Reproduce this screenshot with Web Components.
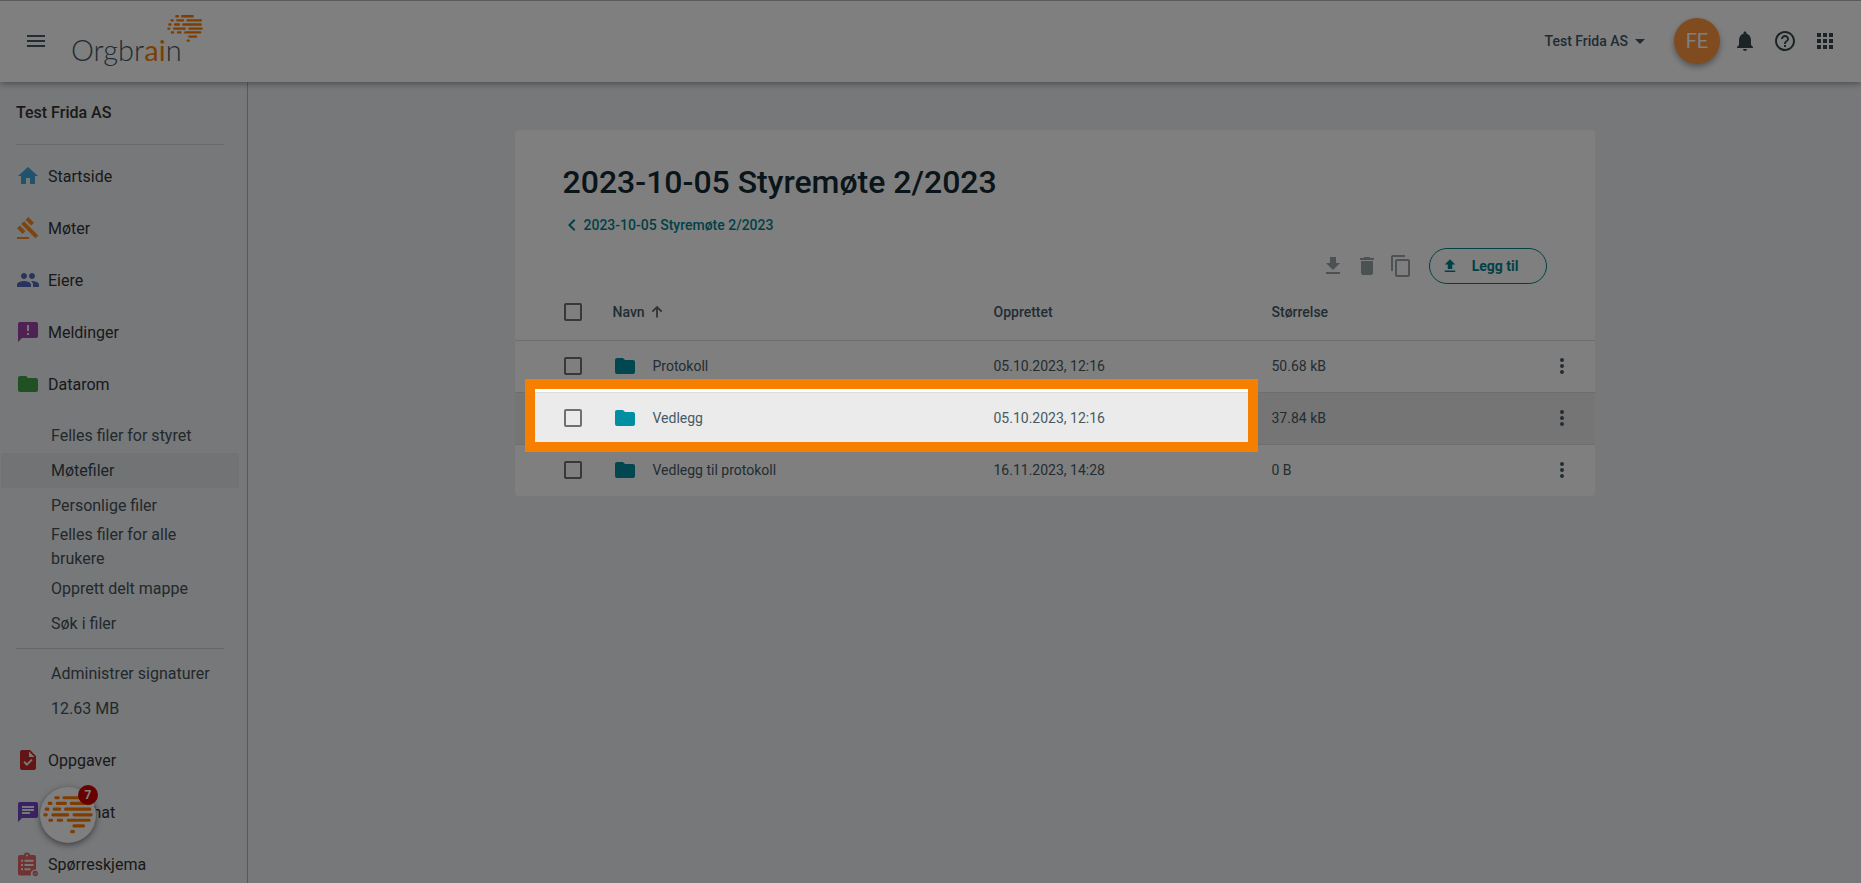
<!DOCTYPE html>
<html lang="no">
<head>
<meta charset="utf-8">
<meta name="viewport" content="width=device-width, initial-scale=1">
<title>Orgbrain – Møtefiler</title>
<style>
  html, body { height: 100%; margin: 0; }
  body { font-family: Roboto, "Liberation Sans", sans-serif; font-size: 16px; color: #37474f; overflow: hidden; }
</style>
</head>
<body>
<ob-app></ob-app>

<script>
const ICONS = {
  menu: '<path d="M3 18h18v-2H3v2zm0-5h18v-2H3v2zm0-7v2h18V6H3z"/>',
  home: '<path d="M10 20v-6h4v6h5v-8h3L12 3 2 12h3v8z"/>',
  gavel: '<path d="M1 21h12v2H1zM5.245 8.07l2.83-2.827 14.14 14.142-2.828 2.828zM12.317 1l5.657 5.656-2.83 2.83-5.654-5.66zM3.825 9.485l5.657 5.657-2.828 2.828-5.657-5.657z"/>',
  people: '<path d="M16 11c1.66 0 2.99-1.34 2.99-3S17.66 5 16 5s-3 1.34-3 3 1.34 3 3 3zm-8 0c1.66 0 2.99-1.34 2.99-3S9.66 5 8 5 5 6.34 5 8s1.34 3 3 3zm0 2c-2.33 0-7 1.17-7 3.5V19h14v-2.5c0-2.33-4.67-3.5-7-3.5zm8 0c-.29 0-.62.02-.97.05 1.16.84 1.97 1.97 1.97 3.45V19h6v-2.5c0-2.33-4.67-3.5-7-3.5z"/>',
  feedback: '<path d="M20 2H4c-1.1 0-1.99.9-1.99 2L2 22l4-4h14c1.1 0 2-.9 2-2V4c0-1.1-.9-2-2-2zm-7 9h-2V5h2v6zm0 4h-2v-2h2v2z"/>',
  folder: '<path d="M10 4H4c-1.1 0-1.99.9-1.99 2L2 18c0 1.1.9 2 2 2h16c1.1 0 2-.9 2-2V8c0-1.1-.9-2-2-2h-8l-2-2z"/>',
  task: '<path d="M14 2H6c-1.1 0-1.99.9-1.99 2L4 20c0 1.1.89 2 1.99 2H18c1.1 0 2-.9 2-2V8l-6-6zm-3.06 16L7.4 14.46l1.41-1.41 2.12 2.12 4.24-4.24 1.41 1.41L10.94 18zM13 9V3.5L18.5 9H13z"/>',
  chat: '<path d="M20 2H4c-1.1 0-1.99.9-1.99 2L2 22l4-4h14c1.1 0 2-.9 2-2V4c0-1.1-.9-2-2-2zM6 9h12v2H6V9zm8 5H6v-2h8v2zm4-6H6V6h12v2z"/>',
  survey: '<path fill-rule="evenodd" d="M4 3h3.8a3.3 3.3 0 0 1 6.4 0H18a2 2 0 0 1 2 2v12.6a4.4 4.4 0 0 0-5 5.900H4a2 2 0 0 1-2-2V5a2 2 0 0 1 2-2zm7-.6a1 1 0 1 0 0 2 1 1 0 0 0 0-2zM5 7.800v2h2v-2zm3.500 0v2H17.500v-2zM5 12v2h2v-2zm3.500 0v2H17.500v-2zM5 16.300v2h2v-2zm3.500 0v2H14.500v-2z"/><circle cx="19.300" cy="21.500" r="2.700"/><path d="M18 21.600l1 1 1.700-2" fill="none" stroke="#eef0f4" stroke-width=".8"/>',
  bell: '<path d="M12 22c1.1 0 2-.9 2-2h-4c0 1.1.89 2 2 2zm6-6v-5c0-3.070-1.640-5.640-4.500-6.320V4c0-.83-.67-1.500-1.500-1.500s-1.500.67-1.500 1.500v.68C7.630 5.360 6 7.920 6 11v5l-2 2v1h16v-1l-2-2z"/>',
  help: '<path d="M11 18h2v-2h-2v2zm1-16C6.480 2 2 6.480 2 12s4.480 10 10 10 10-4.480 10-10S17.520 2 12 2zm0 18c-4.410 0-8-3.590-8-8s3.590-8 8-8 8 3.590 8 8-3.590 8-8 8zm0-14c-2.210 0-4 1.790-4 4h2c0-1.100.9-2 2-2s2 .9 2 2c0 2-3 1.750-3 5h2c0-2.250 3-2.500 3-5 0-2.210-1.790-4-4-4z"/>',
  apps: '<path d="M4 8h4V4H4v4zm6 12h4v-4h-4v4zm-6 0h4v-4H4v4zm0-6h4v-4H4v4zm6 0h4v-4h-4v4zm6-10v4h4V4h-4zm-6 4h4V4h-4v4zm6 6h4v-4h-4v4zm0 6h4v-4h-4v4z"/>',
  caret: '<path d="M7 10l5 5 5-5z"/>',
  back: '<path d="M15.410 7.410L14 6l-6 6 6 6 1.410-1.410L10.830 12z"/>',
  sort: '<path d="M12 17.500V7.500M7.300 11.700L12 7l4.700 4.700" fill="none" stroke="currentColor" stroke-width="1.800"/>',
  more: '<path d="M12 8a2 2 0 1 0 0-4 2 2 0 0 0 0 4zm0 2a2 2 0 1 0 0 4 2 2 0 0 0 0-4zm0 6a2 2 0 1 0 0 4 2 2 0 0 0 0-4z"/>',
  download: '<path d="M19 9h-4V3H9v6H5l7 7 7-7zM5 18v2h14v-2H5z"/>',
  upload: '<path d="M9 16h6v-6h4l-7-7-7 7h4zM5 18h14v2H5z"/>',
  trash: '<path d="M6 19c0 1.100.9 2 2 2h8c1.100 0 2-.9 2-2V7H6v12zM19 4h-3.500l-1-1h-5l-1 1H5v2h14V4z"/>',
  copy: '<path d="M16 1H4c-1.100 0-2 .9-2 2v14h2V3h12V1zm3 4H8c-1.100 0-2 .9-2 2v14c0 1.100.9 2 2 2h11c1.100 0 2-.9 2-2V7c0-1.100-.9-2-2-2zm0 16H8V7h11v14z"/>'
};

class Base extends HTMLElement {
  connectedCallback() {
    if (!this.shadowRoot) this.attachShadow({ mode: 'open' }).innerHTML = this.view();
  }
}

customElements.define('ob-icon', class extends Base {
  view() {
    return `<style>
      :host { display: block; flex: none; width: 24px; height: 24px; }
      svg { display: block; width: 100%; height: 100%; fill: currentColor; overflow: visible; }
    </style><svg viewBox="0 0 24 24" aria-hidden="true">${ICONS[this.getAttribute('name')]}</svg>`;
  }
});

/* The striped brain mark: rounded dashes in seven rows. */
customElements.define('ob-brain', class extends Base {
  view() {
    const rows = [
      [4, [34, 50], [58, 111]],
      [21, [14, 28], [38, 71], [80, 145]],
      [38, [5, 19], [29, 54], [63, 144]],
      [55, [1, 14], [25, 78], [88, 148]],
      [71, [16, 30], [41, 60], [71, 142]],
      [88, [88, 125]],
      [105, [81, 95]]
    ];
    const bars = rows.map(([y, ...segs]) => segs.map(([a, b]) =>
      `<rect x="${a}" y="${y - 4.5}" width="${b - a}" height="9.500" rx="4"/>`).join('')).join('');
    return `<style>
      :host { display: block; }
      svg { display: block; width: 100%; fill: #ff7a00; }
    </style><svg viewBox="0 -1 149 112" aria-hidden="true">${bars}</svg>`;
  }
});

customElements.define('ob-header', class extends Base {
  view() {
    return `<style>
      :host { display: flex; align-items: center; box-sizing: border-box; height: 82px; padding: 0 24px 2px;
        border-top: 1px solid #b4b4b6; background: #fff; color: #455a64; position: relative; z-index: 1;
        box-shadow: 0 2px 6px rgba(0,0,0,.35); }
      button { display: flex; align-items: center; border: 0; padding: 0; background: none; color: inherit; font: inherit; }
      .logo { display: flex; align-items: flex-start; margin-left: 23px; height: 56px; text-decoration: none;
        color: #3f5866; font: 300 29px/36px Lato, "Open Sans", sans-serif; position: relative; }
      .logo .word { padding-top: 19px; }
      .logo b { font-weight: 400; color: #f77e00; }
      .logo ob-brain { position: absolute; left: 96px; top: 2px; width: 36px; }
      .right { display: flex; align-items: center; gap: 16px; margin-left: auto; color: #37474f; }
      .org { font-size: 14px; font-weight: 500; color: #3f5866; margin-right: 6px; }
      .avatar { justify-content: center; width: 46px; height: 46px; margin-right: -3px; border-radius: 50%;
        background: #ff963f; color: #fff; font-size: 20px; box-shadow: 0 3px 6px rgba(0,0,0,.35); }
    </style>
    <button aria-label="Meny"><ob-icon name="menu"></ob-icon></button>
    <a class="logo" href="#" aria-label="Orgbrain"><span class="word">Orgbr<b>ai</b>n</span><ob-brain></ob-brain></a>
    <div class="right">
      <button class="org">Test Frida AS<ob-icon name="caret"></ob-icon></button>
      <button class="avatar">FE</button>
      <button aria-label="Varsler"><ob-icon name="bell"></ob-icon></button>
      <button aria-label="Hjelp"><ob-icon name="help"></ob-icon></button>
      <button aria-label="Apper"><ob-icon name="apps"></ob-icon></button>
    </div>`;
  }
});

customElements.define('ob-nav-item', class extends Base {
  view() {
    return `<style>
      :host { display: block; }
      a { display: flex; align-items: center; gap: 8px; height: 52px; padding-left: 16px; color: #333; text-decoration: none; }
      ob-icon { color: ${this.getAttribute('color')}; }
    </style><a href="#"><ob-icon name="${this.getAttribute('icon')}"></ob-icon><slot></slot></a>`;
  }
});

customElements.define('ob-sub-item', class extends Base {
  view() {
    return `<style>
      :host { display: block; margin: 0 8px 0 1px; }
      :host([active]) { background: #e4e6e9; }
      a { display: flex; align-items: center; min-height: 35px; padding: 0 20px 0 50px; line-height: 24px; color: #455257; text-decoration: none; }
      :host([active]) a { color: #37474f; }
    </style><a href="#"><slot></slot></a>`;
  }
});

customElements.define('ob-sidebar', class extends Base {
  view() {
    return `<style>
      :host { display: block; box-sizing: border-box; width: 248px; overflow: hidden; border-right: 1px solid #b0b3b6; background: #eef0f4; }
      .top { margin: 0 23px 5px 16px; border-bottom: 1px solid #cdd0d3; }
      h2 { margin: 0; padding: 19px 0; font-size: 16px; font-weight: 500; line-height: 24px; color: #333; }
      .sub { padding: 8px 0; }
      hr { margin: 7px 23px 7px 16px; border: 0; border-top: 1px solid #c8cbce; }
    </style>
    <div class="top"><h2>Test Frida AS</h2></div>
    <nav>
      <ob-nav-item icon="home" color="#42a5dc">Startside</ob-nav-item>
      <ob-nav-item icon="gavel" color="#f58a1f">Møter</ob-nav-item>
      <ob-nav-item icon="people" color="#5268b8">Eiere</ob-nav-item>
      <ob-nav-item icon="feedback" color="#a045a8">Meldinger</ob-nav-item>
      <ob-nav-item icon="folder" color="#43a047">Datarom</ob-nav-item>
      <div class="sub">
        <ob-sub-item>Felles filer for styret</ob-sub-item>
        <ob-sub-item active>Møtefiler</ob-sub-item>
        <ob-sub-item>Personlige filer</ob-sub-item>
        <ob-sub-item>Felles filer for alle brukere</ob-sub-item>
        <ob-sub-item>Opprett delt mappe</ob-sub-item>
        <ob-sub-item>Søk i filer</ob-sub-item>
        <hr>
        <ob-sub-item>Administrer signaturer</ob-sub-item>
        <ob-sub-item>12.63 MB</ob-sub-item>
      </div>
      <ob-nav-item icon="task" color="#c62828">Oppgaver</ob-nav-item>
      <ob-nav-item icon="chat" color="#7546c4">Styrechat</ob-nav-item>
      <ob-nav-item icon="survey" color="#e46464">Spørreskjema</ob-nav-item>
    </nav>`;
  }
});

/* Highlight frame; its spread shadow dims the rest of the page. */
customElements.define('ob-spotlight', class extends Base {
  view() {
    return `<style>
      :host { display: block; box-sizing: border-box; border: 10px solid #f77f00; pointer-events: none;
        box-shadow: 0 0 0 4000px rgba(0,0,0,.5); }
    </style>`;
  }
});

customElements.define('ob-files', class extends Base {
  view() {
    const files = [
      ['Protokoll', '05.10.2023, 12:16', '50.68 kB'],
      ['Vedlegg', '05.10.2023, 12:16', '37.84 kB'],
      ['Vedlegg til protokoll', '16.11.2023, 14:28', '0 B']
    ];
    return `<style>
      :host { display: block; position: relative; padding-top: 33px; border-radius: 4px; background: #fff; color: #455a64; font-size: 14px; }
      h1 { margin: 0 48px; font-size: 32px; font-weight: 500; line-height: 38px; color: #132a33; }
      .back { display: flex; align-items: center; width: fit-content; margin: 12px 0 0 45px; line-height: 24px; font-weight: 500; color: #00838f; text-decoration: none; }
      .tools { display: flex; justify-content: flex-end; align-items: center; gap: 10px; margin: 11px 48px 0; }
      button { display: flex; align-items: center; padding: 0; border: 0; background: none; color: inherit; font: inherit; }
      .tools .tool { color: #98a4a9; }
      .tools .add { box-sizing: border-box; height: 36px; margin-left: 6px; padding: 0 27px 0 11px; gap: 13px; border: 1px solid #00838f;
        border-radius: 18px; color: #00838f; font-weight: 700; }
      .add ob-icon { width: 18px; height: 18px; }
      table { width: 100%; table-layout: fixed; border-collapse: collapse; }
      th, td { box-sizing: border-box; height: 52px; padding: 0; text-align: left; font-weight: 400; border-bottom: 1px solid #dcdcdc; }
      th { height: 56px; font-weight: 500; }
      tr:last-child td { border-bottom: 0; }
      tr.current { background: #ebebeb; }
      th.check, td.check { width: 98px; padding-left: 49px; }
      .name { width: 381px; }
      .made { width: 278px; }
      .act { width: 45px; }
      .cell { display: flex; align-items: center; gap: 16px; }
      .sort { display: flex; align-items: center; }
      .sort ob-icon { color: #666; }
      .cell ob-icon { color: #008fa1; }
      input { display: block; appearance: none; box-sizing: border-box; width: 18px; height: 18px; margin: 0; border: 2px solid #707070; border-radius: 2px; }
      ob-spotlight { position: absolute; z-index: 5; top: 249px; left: 10px; right: 337px; height: 73px; }
    </style>
    <h1>2023-10-05 Styremøte 2/2023</h1>
    <a class="back" href="#"><ob-icon name="back"></ob-icon>2023-10-05 Styremøte 2/2023</a>
    <div class="tools">
      <button class="tool" aria-label="Last ned"><ob-icon name="download"></ob-icon></button>
      <button class="tool" aria-label="Slett"><ob-icon name="trash"></ob-icon></button>
      <button class="tool" aria-label="Kopier"><ob-icon name="copy"></ob-icon></button>
      <button class="add"><ob-icon name="upload"></ob-icon>Legg til</button>
    </div>
    <table>
      <thead><tr>
        <th class="check"><input type="checkbox" aria-label="Velg alle"></th>
        <th class="name"><button class="sort">Navn<ob-icon name="sort"></ob-icon></button></th>
        <th class="made">Opprettet</th><th>Størrelse</th><th class="act"></th>
      </tr></thead>
      <tbody>${files.map(([n, d, s], i) => `<tr${i === 1 ? ' class="current"' : ''}>
        <td class="check"><input type="checkbox" aria-label="Velg ${n}"></td>
        <td><div class="cell"><ob-icon name="folder"></ob-icon>${n}</div></td>
        <td>${d}</td><td>${s}</td>
        <td><button aria-label="Handlinger"><ob-icon name="more"></ob-icon></button></td>
      </tr>`).join('')}</tbody>
    </table>
    <ob-spotlight></ob-spotlight>`;
  }
});

customElements.define('ob-assistant', class extends Base {
  view() {
    return `<style>
      :host { display: block; width: 56px; height: 56px; }
      button { display: grid; place-items: center; width: 100%; height: 100%; padding: 0; border: 0; border-radius: 50%; background: #fff;
        box-shadow: 0 2px 6px rgba(0,0,0,.5); }
      ob-brain { width: 50px; }
      span { position: absolute; top: -2px; right: -2px; width: 20px; height: 20px; border-radius: 50%; background: #d00000;
        color: #fff; font-size: 12px; font-weight: 700; line-height: 20px; text-align: center; }
    </style><button aria-label="Assistent"><ob-brain></ob-brain></button><span>7</span>`;
  }
});

customElements.define('ob-app', class extends Base {
  view() {
    return `<style>
      :host { display: flex; flex-direction: column; height: 100vh; overflow: hidden; background: #eef0f4; }
      .body { display: flex; flex: 1; min-height: 0; }
      ob-sidebar { flex: none; }
      main { flex: 1; min-width: 0; padding: 48px 24px; }
      ob-files { max-width: 1080px; margin: 0 auto; }
      ob-assistant { position: fixed; left: 40px; bottom: 40px; z-index: 2; }
    </style>
    <ob-header></ob-header>
    <div class="body"><ob-sidebar></ob-sidebar><main><ob-files></ob-files></main></div>
    <ob-assistant></ob-assistant>`;
  }
});
</script>
</body>
</html>
